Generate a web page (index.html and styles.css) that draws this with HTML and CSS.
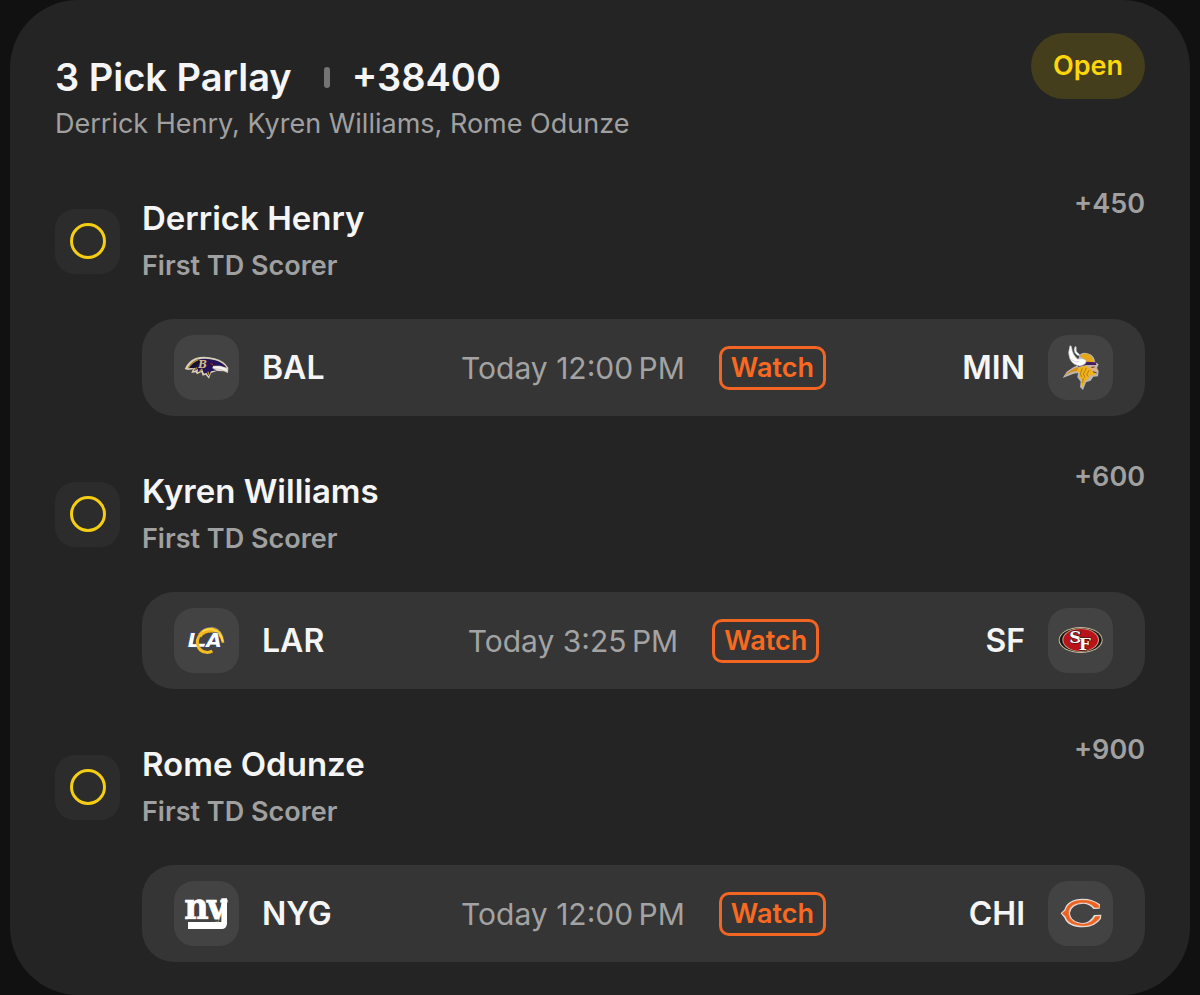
FILE: index.html
```html
<!DOCTYPE html>
<html lang="en">
<head>
    <meta charset="UTF-8">
    <meta name="viewport" content="width=device-width, initial-scale=1.0">
    <title>3 Pick Parlay</title>
    <link rel="stylesheet" href="styles.css">
</head>
<body>
    <main class="card">
        <header class="card-header">
            <div class="summary">
                <h1><span>3 Pick Parlay</span><span class="divider"></span><span>+38400</span></h1>
                <p>Derrick Henry, Kyren Williams, Rome Odunze</p>
            </div>
            <span class="badge">Open</span>
        </header>

        <section class="leg">
            <div class="leg-header">
                <div class="status"><span class="ring"></span></div>
                <div class="pick">
                    <h2>Derrick Henry</h2>
                    <p>First TD Scorer</p>
                </div>
                <span class="odds">+450</span>
            </div>
            <div class="game">
                <div class="team">
                    <svg class="logo" viewBox="15 29 195 195" aria-hidden="true">
                        <path d="M47 131 Q57 107 80 98 Q106 90 137 99 Q166 107 178 127 L177 143 L164 138 L143 137 L126 143 L120 160 L110 148 L101 151 L97 140 L84 147 L80 141 L67 143 L72 132 L57 134 Z" fill="#d8cfb8"/>
                        <path d="M56 129 Q67 109 84 103 Q113 96 139 105 Q162 112 173 127 L154 121 L132 121 L130 129 L144 135 L126 138 L119 153 L112 142 L105 145 L100 133 L86 141 L87 131 L74 138 L79 127 Z" fill="#241459"/>
                        <path d="M58 127 Q76 105 101 105 L91 113 Q81 121 75 129 Z" fill="#17122b"/>
                        <path d="M58 128 Q68 111 88 103 M75 135 L84 127 M91 139 L100 130 M119 149 L117 139" fill="none" stroke="#b58e2d" stroke-width="4"/>
                        <path d="M132 124 Q155 119 172 130 L174 138 Q154 128 133 128 Z" fill="#f4f4f6"/>
                        <path d="M131 132 Q151 132 164 136 L143 135 Z" fill="#d9d9df"/>
                        <path d="M117 112 L140 118 L128 121 Z" fill="#101018"/>
                        <path d="M124 115 L132 118" stroke="#c03539" stroke-width="3"/>
                        <text class="serif-mark" x="88" y="127" font-size="31" font-style="italic" fill="#d4bd83">B</text>
                    </svg>
                    <span>BAL</span>
                </div>
                <div class="kickoff">
                    <span>Today 12:00&#8239;PM</span>
                    <button type="button">Watch</button>
                </div>
                <div class="team away">
                    <span>MIN</span>
                    <svg class="logo" viewBox="22 29 195 195" aria-hidden="true">
                        <path d="M116 89 Q129 77 149 87 Q162 95 163 110 L174 117 L169 128 L174 137 L172 153 L158 154 L150 166 L136 171 L127 194 L118 185 L120 169 L110 156 L112 143 L99 145 L66 158 L78 139 L98 126 L111 120 Z" fill="#b9b6b3"/>
                        <path d="M117 91 Q138 77 153 94 L161 111 L139 111 Z" fill="#e8a719"/>
                        <path d="M109 115 L136 109 L165 111 L167 119 L137 119 L113 125 Z" fill="#45205f"/>
                        <path d="M71 153 Q82 138 99 130 L114 124 L110 137 Q90 138 71 153 Z" fill="#db8f12"/>
                        <path d="M115 126 L136 121 L145 128 L154 124 L152 134 L166 143 L159 151 L147 150 L141 163 L133 166 L128 184 L122 181 L125 163 L114 155 L116 143 L108 139 Z" fill="#efb21b"/>
                        <path d="M145 122 L164 120 L170 135 L162 139 L149 132 Z" fill="#dfb08d"/>
                        <path d="M152 126 L162 125 M157 139 L168 143" stroke="#574020" stroke-width="3"/>
                        <path d="M125 129 L119 145 L123 155 M137 128 L128 146 L133 157 M145 135 L138 148 L143 154 M128 158 L126 173" fill="none" stroke="#99620f" stroke-width="2"/>
                        <path d="M88 61 Q80 83 88 101 Q96 119 118 122 Q139 118 136 105 Q127 97 111 101 Q96 91 92 63 Z" fill="#fff" stroke="#b8b8bc" stroke-width="2"/>
                        <path d="M104 63 Q97 72 103 83 Q110 94 119 92 L115 85 Q105 82 107 65 Z" fill="#fff" stroke="#9b9ba2" stroke-width="2"/>
                        <path d="M92 103 Q105 113 116 109" fill="none" stroke="#b9b9c0" stroke-width="2"/>
                    </svg>
                </div>
            </div>
        </section>

        <section class="leg">
            <div class="leg-header">
                <div class="status"><span class="ring"></span></div>
                <div class="pick">
                    <h2>Kyren Williams</h2>
                    <p>First TD Scorer</p>
                </div>
                <span class="odds">+600</span>
            </div>
            <div class="game">
                <div class="team">
                    <svg class="logo" viewBox="15 24 195 195" aria-hidden="true">
                        <path d="M88 101 Q103 80 130 81 Q162 86 166 128 L158 128 Q153 102 133 98 Q107 96 96 113 Z" fill="#f3b51b"/>
                        <path d="M89 100 Q103 80 130 81 Q162 86 167 126" fill="none" stroke="#304aa5" stroke-width="2"/>
                        <path d="M101 94 Q126 79 148 98 Q159 109 161 124" fill="none" stroke="#ffdb49" stroke-width="5"/>
                        <text class="sans-mark" x="56 112" y="140" font-size="60" fill="#fff" stroke="#394ca0" stroke-width="3">LA</text>
                        <path d="M80 131 H109 L105 140 H77 Z" fill="#fff"/>
                        <path d="M101 99 Q84 109 85 129 Q88 155 112 157 Q122 158 130 153" fill="none" stroke="#f4bb21" stroke-width="9"/>
                    </svg>
                    <span>LAR</span>
                </div>
                <div class="kickoff">
                    <span>Today 3:25&#8239;PM</span>
                    <button type="button">Watch</button>
                </div>
                <div class="team away">
                    <span>SF</span>
                    <svg class="logo" viewBox="22 24 195 195" aria-hidden="true">
                        <ellipse cx="120" cy="120" rx="66" ry="39" fill="#c6b799"/>
                        <ellipse cx="120" cy="120" rx="63" ry="36" fill="#171413"/>
                        <ellipse cx="120" cy="120" rx="55" ry="35" fill="#c8a987"/>
                        <ellipse cx="120" cy="120" rx="52" ry="33" fill="#b8131b"/>
                        <text class="serif-mark" x="86 114" y="128 149" font-size="51" fill="#fff" stroke="#241414" stroke-width="3">SF</text>
                    </svg>
                </div>
            </div>
        </section>

        <section class="leg">
            <div class="leg-header">
                <div class="status"><span class="ring"></span></div>
                <div class="pick">
                    <h2>Rome Odunze</h2>
                    <p>First TD Scorer</p>
                </div>
                <span class="odds">+900</span>
            </div>
            <div class="game">
                <div class="team">
                    <svg class="logo" viewBox="15 24 195 195" aria-hidden="true">
                        <text class="condensed-mark" x="46 113" y="137" font-size="112" fill="#fff" stroke="#fff" stroke-width="2">ny</text>
                        <path d="M157 76 H174 V153 Q172 168 158 168 H57 V147 H157 Z" fill="#fff"/>
                        <path d="M56 143 H149" stroke="#434343" stroke-width="7"/>
                    </svg>
                    <span>NYG</span>
                </div>
                <div class="kickoff">
                    <span>Today 12:00&#8239;PM</span>
                    <button type="button">Watch</button>
                </div>
                <div class="team away">
                    <span>CHI</span>
                    <svg class="logo" viewBox="22 24 195 195" aria-hidden="true">
                        <path d="M60 121 L71 110 Q80 78 126 77 Q157 77 178 94 L177 107 L158 108 Q149 94 128 92 Q91 94 88 120 Q90 147 128 150 Q149 147 160 126 L182 125 L181 137 Q163 162 128 163 Q80 162 71 134 Z" fill="#e5ddd8"/>
                        <path d="M65 121 L75 113 Q82 83 126 82 Q156 82 174 97 V103 L161 103 Q149 88 127 88 Q86 90 83 120 Q86 151 128 154 Q154 151 164 131 L177 130 L176 136 Q159 158 128 158 Q82 157 75 130 Z" fill="#ed6221" stroke="#ed6221" stroke-width="2"/>
                    </svg>
                </div>
            </div>
        </section>
    </main>
</body>
</html>
```
FILE: styles.css
```css
* {
    box-sizing: border-box;
}

body {
    margin: 0;
    padding: 0 10px;
    background-color: #111;
    color: #f5f5f5;
    font-family: Inter, "Liberation Sans", sans-serif;
}

h1, h2, p {
    margin: 0;
    font-weight: 400;
}

.card {
    display: flex;
    flex-direction: column;
    gap: 43px;
    padding: 33px 45px;
    border-radius: 68px;
    background-color: #242424;
}

.card-header {
    display: flex;
    align-items: flex-start;
    justify-content: space-between;
}

.summary {
    padding: 20px 0 1px;
}

.summary h1 {
    display: flex;
    align-items: center;
    font-size: 38px;
    font-weight: 600;
    line-height: 48px;
}

.summary p {
    margin-top: 5px;
    color: #a0a0a0;
    font-size: 27px;
    line-height: 36px;
}

.divider {
    width: 6px;
    height: 21px;
    margin: 0 22px 0 32px;
    border-radius: 3px;
    background-color: #747474;
}

.badge {
    padding: 0 22px;
    border-radius: 33px;
    background-color: #453e1c;
    color: #ffd60a;
    font-size: 27px;
    font-weight: 600;
    line-height: 66px;
}

.leg {
    display: flex;
    flex-direction: column;
    gap: 23px;
}

.leg-header {
    display: flex;
    align-items: center;
    gap: 22px;
}

.status {
    display: flex;
    align-items: center;
    justify-content: center;
    width: 65px;
    height: 65px;
    border-radius: 20px;
    background-color: #2c2c2c;
}

.ring {
    width: 36px;
    height: 36px;
    border: 3px solid #f5ce14;
    border-radius: 50%;
}

.pick {
    flex: 1;
    padding: 10px 0 12px;
}

.pick h2 {
    font-size: 33px;
    font-weight: 600;
    line-height: 44px;
}

.pick p {
    margin-top: 8px;
    color: #a0a0a0;
    font-size: 27px;
    font-weight: 600;
    line-height: 36px;
}

.odds {
    align-self: flex-start;
    color: #a0a0a0;
    font-size: 27px;
    font-weight: 600;
    line-height: 36px;
}

.game {
    display: grid;
    grid-template-columns: 1fr auto 1fr;
    align-items: center;
    margin-left: 87px;
    padding: 16px 32px;
    border-radius: 32px;
    background-color: #353535;
}

.team {
    display: flex;
    align-items: center;
    gap: 23px;
    font-size: 32px;
    font-weight: 600;
}

.away {
    justify-content: flex-end;
}

.logo {
    width: 65px;
    height: 65px;
    border-radius: 20px;
    background-color: #434343;
}

.kickoff {
    display: flex;
    align-items: center;
    gap: 34px;
    color: #a3a3a3;
    font-size: 30px;
}

.kickoff button {
    padding: 0 9px;
    border: 3px solid #f26522;
    border-radius: 10px;
    background: none;
    color: #f96a20;
    font-family: inherit;
    font-size: 27px;
    font-weight: 600;
    line-height: 38px;
    cursor: pointer;
}

.serif-mark {
    font-family: "DejaVu Serif", serif;
    font-weight: 700;
    paint-order: stroke;
}

.condensed-mark {
    font-family: "DejaVu Serif Condensed", "DejaVu Serif", serif;
    font-weight: 700;
}

.sans-mark {
    font-family: "DejaVu Sans", sans-serif;
    font-style: italic;
    font-weight: 700;
    paint-order: stroke;
}
```
